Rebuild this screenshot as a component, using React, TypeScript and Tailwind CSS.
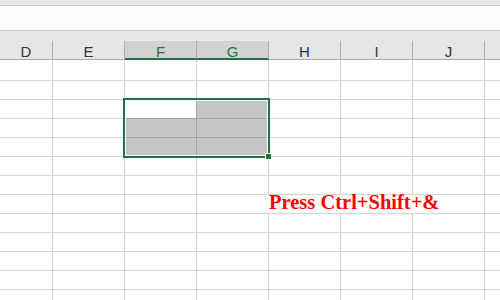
const columns = ['D', 'E', 'F', 'G', 'H', 'I', 'J', '']
const selectedCols = [2, 3]
const rowCount = 13
// selection covers rows 2-4, cols F-G; F at row 2 is the active cell
const selRows = [2, 3, 4]
const textRow = 7
const overflowCols = [3, 4, 5] // gridlines hidden under the overflowing text

function colWidth(index: number) {
  return index === 0 ? 'w-[53px]' : 'w-[72px]'
}

function HeaderRow() {
  return (
    <div className="flex h-[19px] shrink-0">
      {columns.map((name, index) => {
        const selected = selectedCols.includes(index)
        return (
          <div
            key={index}
            className={`${colWidth(index)} shrink-0 border-r border-r-[#ababab] pt-[3px] text-center text-[15px] leading-[16px] ${
              selected
                ? 'border-b-2 border-b-[#217346] bg-[#d2d2d2] text-[#217346]'
                : 'border-b border-b-[#ababab] bg-[#e6e6e6] text-[#333333]'
            }`}
          >
            {name}
          </div>
        )
      })}
    </div>
  )
}

function GridRow({ row }: { row: number }) {
  const height = row === 0 ? 'h-[21px]' : 'h-[19px]'
  return (
    <div className={`flex ${height} shrink-0`}>
      {columns.map((_, index) => {
        const inSelection = selRows.includes(row) && selectedCols.includes(index)
        const active = inSelection && row === 2 && index === 2
        const hideRight = row === textRow && overflowCols.includes(index)
        let cls = `${colWidth(index)} shrink-0 border-b`
        if (inSelection) {
          cls += ' border-r border-[#a5a5a5]'
          cls += active ? ' bg-white' : ' bg-[#c6c6c6]'
        } else {
          cls += hideRight ? ' border-b-[#d4d4d4] pr-px' : ' border-r border-[#d4d4d4]'
        }
        return (
          <div key={index} className={`${cls} relative`}>
            {row === textRow && index === 4 && (
              <span className="absolute left-0 top-0 z-10 whitespace-nowrap font-['Liberation_Serif',serif] text-[20.5px] font-bold leading-[14px] text-[#ff0000]">
                Press Ctrl+Shift+&amp;
              </span>
            )}
          </div>
        )
      })}
    </div>
  )
}

export default function App() {
  return (
    <div className="relative flex h-[300px] w-[500px] flex-col overflow-hidden bg-white font-['Liberation_Sans',sans-serif]">
      <div className="h-[6px] shrink-0 border-b border-[#c8c8c8] bg-[#e6e6e6]" />
      <div className="h-[25px] shrink-0 border-b border-[#c6c6c6] bg-[#fdfdfd]" />
      <div className="h-[10px] shrink-0 bg-[#e6e6e6]" />
      <HeaderRow />
      {Array.from({ length: rowCount }, (_, row) => (
        <GridRow key={row} row={row} />
      ))}

      {/* selection outline + fill handle */}
      <div className="absolute left-[123px] top-[98px] h-[60px] w-[147px] border-2 border-[#217346] shadow-[inset_0_0_0_1px_#ffffff]" />
      <div className="absolute left-[265px] top-[153px] h-[7px] w-[7px] border border-white bg-[#217346]" />
    </div>
  )
}
